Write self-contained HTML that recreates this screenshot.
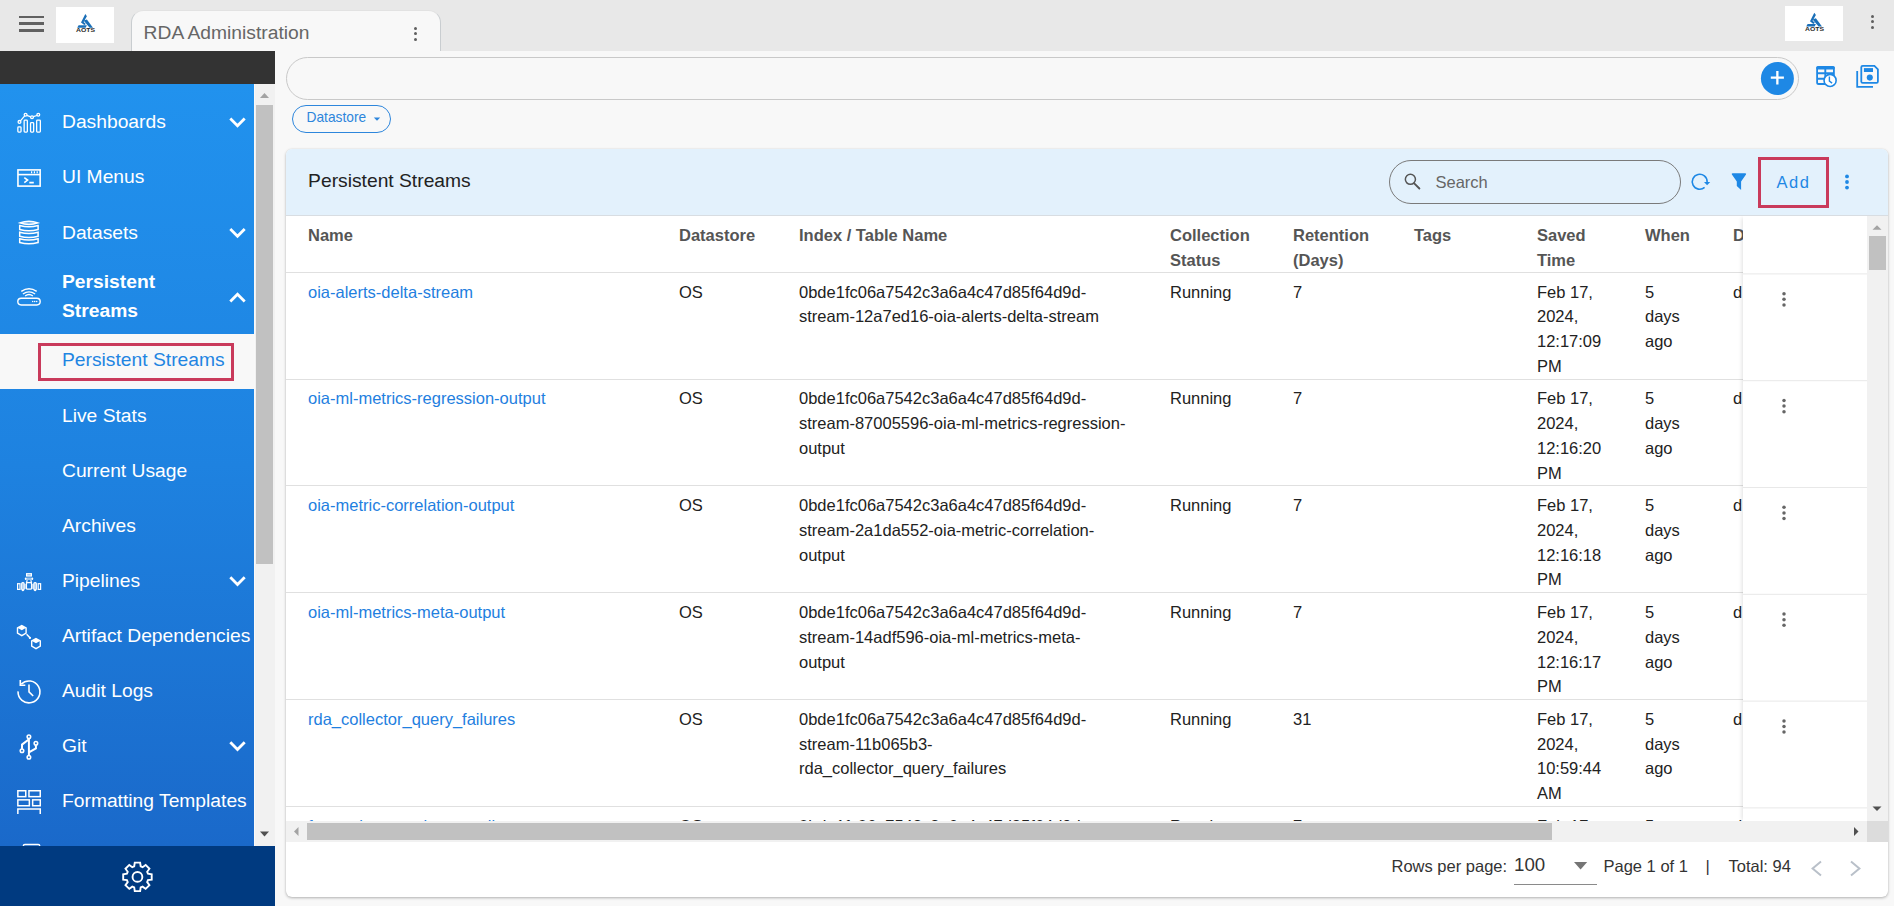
<!DOCTYPE html>
<html><head><meta charset="utf-8">
<style>
*{box-sizing:border-box;margin:0;padding:0}
html,body{width:1894px;height:906px;overflow:hidden;background:#f8f8f8;font-family:"Liberation Sans",sans-serif}
.abs{position:absolute}
#top{left:0;top:0;width:1894px;height:51px;background:#e8e8e8}
.hb{left:19px;width:25px;height:2.6px;background:#616161}
.logo{background:#fff}
#tab{left:131px;top:10px;width:310px;height:42px;background:#f8f8f8;border:1px solid #c9cdd0;border-top-color:#e2e2e2;border-bottom:none;border-radius:12.5px 12.5px 0 0}
#tab .t{left:11.6px;top:11.2px;font-size:19.25px;line-height:1.1172;color:#666;white-space:nowrap}
.dot{width:3.1px;height:3.1px;border-radius:50%;background:#5f5f5f}
#dark{left:0;top:51px;width:275px;height:33px;background:#333}
#side{left:0;top:84px;width:254px;height:762px;background:linear-gradient(180deg,#2192ee 0%,#1e82e0 50%,#1a69ca 100%);overflow:hidden}
#sscroll{left:254px;top:84px;width:21px;height:762px;background:#f1f1f1;border-left:1px solid #f9f9f9}
#foot{left:0;top:846px;width:275px;height:60px;background:#003a80}
.st{position:absolute;left:62px;font-size:19.25px;line-height:1.1172;color:#fff;white-space:nowrap}
.st.b{font-weight:bold}
#main{left:275px;top:51px;width:1619px;height:855px;background:#f8f8f8}
#card{left:286px;top:149px;width:1602px;height:748px;background:#fff;border-radius:6px;box-shadow:0 1px 3px rgba(0,0,0,.28),0 0 1px rgba(0,0,0,.12);overflow:hidden}
#chead{left:0;top:0;width:1602px;height:66.5px;background:#e3f1fc;border-bottom:1px solid #d8dde2}
.th{position:absolute;font-weight:bold;font-size:16.5px;line-height:24.75px;color:#555}
.td{position:absolute;font-size:16.5px;line-height:24.75px;color:#222;white-space:nowrap}
.lnk{color:#1f80e0}
.pg{font-size:16.5px;line-height:1.1172;color:#333;white-space:nowrap}
.hr{position:absolute;left:0;width:1581px;height:1px;background:#e0e0e0}
</style></head><body>
<div id="top" class="abs">
  <div class="abs hb" style="top:15.5px"></div>
  <div class="abs hb" style="top:22.2px"></div>
  <div class="abs hb" style="top:29px"></div>
  <div class="abs logo" style="left:56px;top:7px;width:58px;height:36px"></div>
  <div id="tab" class="abs"><div class="abs t">RDA Administration</div>
    <div class="abs dot" style="left:281.5px;top:15.7px"></div>
    <div class="abs dot" style="left:281.5px;top:21.2px"></div>
    <div class="abs dot" style="left:281.5px;top:26.7px"></div>
  </div>
  <div class="abs logo" style="left:1785px;top:6px;width:58px;height:35px"></div>
<svg class="abs" style="left:0;top:0" width="1894" height="51" viewBox="0 0 1894 51">
 <defs><g id="lg">
  <path d="M85.3,14 L86.9,16.3 L83.6,21.9 L85.9,23.9 L84.3,25.1 L81,22.4 Z" fill="#1a6fb8"/>
  <path d="M83.6,20.6 L86.9,19.4 L93,27.8 L89.6,27.8 Z" fill="#1a6fb8"/>
  <path d="M78.6,25.2 L86.9,25.2 L85.6,27.8 L77.2,27.8 Z" fill="#1a6fb8"/>
  <text x="85.6" y="32.4" font-family="Liberation Sans" font-weight="bold" font-size="5.2" text-anchor="middle" fill="#2a2a2a" textLength="19" lengthAdjust="spacingAndGlyphs" transform="translate(0,0)">AOTS</text>
 </g></defs>
 <use href="#lg"/>
 <use href="#lg" transform="translate(1729,-1.2)"/>
</svg>
  <div class="abs dot" style="left:1871.1px;top:14.6px"></div>
  <div class="abs dot" style="left:1871.1px;top:20.1px"></div>
  <div class="abs dot" style="left:1871.1px;top:25.6px"></div>
</div>
<div id="dark" class="abs"></div>
<div id="side" class="abs">
<div class="st" style="top:27.08px">Dashboards</div>
<div class="st" style="top:82.08px">UI Menus</div>
<div class="st" style="top:137.58px">Datasets</div>
<div class="st b" style="top:186.90px">Persistent</div>
<div class="st b" style="top:215.70px">Streams</div>
<div class="abs" style="left:0;top:250px;width:254px;height:55px;background:#f8f8f8"></div>
<div class="abs" style="left:38px;top:259px;width:196px;height:38px;border:3px solid #c93a5b"></div>
<div class="st" style="top:265.40px;color:#1f85e2">Persistent Streams</div>
<div class="st" style="top:320.88px">Live Stats</div>
<div class="st" style="top:375.68px">Current Usage</div>
<div class="st" style="top:430.68px">Archives</div>
<div class="st" style="top:485.68px">Pipelines</div>
<div class="st" style="top:540.68px">Artifact Dependencies</div>
<div class="st" style="top:595.68px">Audit Logs</div>
<div class="st" style="top:650.68px">Git</div>
<div class="st" style="top:705.88px">Formatting Templates</div>
<svg class="abs" style="left:0;top:0" width="254" height="762" viewBox="0 84 254 762" fill="none" stroke="#fff" stroke-width="1.4">
 <g fill="none" stroke="#fff" stroke-width="2.8" stroke-linejoin="miter"><path d="M230.3,118.60 L237.5,125.80 L244.7,118.60"/><path d="M230.3,229.10 L237.5,236.30 L244.7,229.10"/><path d="M230.3,301.40 L237.5,294.20 L244.7,301.40"/><path d="M230.3,577.20 L237.5,584.40 L244.7,577.20"/><path d="M230.3,742.20 L237.5,749.40 L244.7,742.20"/></g>
 <!-- dashboards -->
 <g stroke-width="1.3">
  <rect x="17.85" y="126.95" width="3.2" height="5.2" rx="0.8"/>
  <rect x="24.15" y="120.15" width="3.2" height="12" rx="0.8"/>
  <rect x="30.55" y="122.65" width="3.1" height="9.5" rx="0.8"/>
  <rect x="36.65" y="120.15" width="3.7" height="12" rx="0.8"/>
  <circle cx="19.5" cy="121.9" r="1.4"/><circle cx="25.6" cy="114.7" r="1.4"/><circle cx="32" cy="117.3" r="1.4"/><circle cx="38.3" cy="114.8" r="1.4"/>
  <path d="M20.4,120.8 L24.7,115.8 M26.9,115.4 L30.7,116.8 M33.3,116.6 L37,115.5"/>
 </g>
 <!-- ui menus -->
 <g stroke-width="1.6">
  <rect x="17.95" y="169.9" width="22.2" height="16.2"/>
  <path d="M17.9,174.6 H40.1"/>
  <path d="M24.3,177.6 L27.6,180.1 L24.3,182.6 M29.3,182.6 H33.8"/>
 </g>
 <g fill="#fff" stroke="none"><rect x="31" y="171.3" width="1.2" height="2"/><rect x="33.8" y="171.3" width="1.2" height="2"/><rect x="36.6" y="171.3" width="1.2" height="2"/></g>
 <!-- datasets -->
 <g stroke-width="1.5">
  <path d="M19.9,222.9 Q28.9,219.6 37.9,222.9 Q28.9,225.9 19.9,222.9 Z" fill="rgba(255,255,255,.35)"/>
  <path d="M19.7,225.6 Q28.9,228 38.1,225.6 V229.6 Q28.9,232 19.7,229.6 Z"/>
  <path d="M19.7,232.2 Q28.9,234.6 38.1,232.2 V236.2 Q28.9,238.6 19.7,236.2 Z"/>
  <path d="M19.7,238.8 Q28.9,241.2 38.1,238.8 V242.6 Q28.9,245 19.7,242.6 Z"/>
 </g>
 <!-- persistent streams -->
 <g stroke-width="1.4">
  <rect x="17.8" y="298.2" width="22.4" height="6.8" rx="3.4"/>
  <path d="M21.3,291.4 Q29,286.2 36.7,291.4 M22.9,294 Q29,289.8 35.1,294 M25.1,296 Q29,293 32.9,296"/>
 </g>
 <g fill="#fff" stroke="none"><circle cx="32.7" cy="301.6" r="0.75"/><circle cx="34.7" cy="301.6" r="0.75"/><circle cx="36.7" cy="301.6" r="0.75"/></g>
 <!-- pipelines -->
 <g stroke-width="1.2">
  <rect x="26.6" y="573.7" width="4.8" height="2.3" fill="rgba(255,255,255,.45)"/>
  <rect x="25.7" y="577.5" width="6.6" height="2.5" rx="1.2" fill="rgba(255,255,255,.55)" stroke="none"/>
  <rect x="24.9" y="577.6" width="1.5" height="2.4" rx=".7" fill="#fff" stroke="none"/>
  <rect x="31.6" y="577.6" width="1.5" height="2.4" rx=".7" fill="#fff" stroke="none"/>
  <path d="M27.2,580.2 L26.4,583 M30.8,580.2 L31.6,583"/>
  <rect x="26.4" y="582.6" width="5.2" height="6.6" rx="1.2" fill="none" stroke-width="1.3"/>
  <rect x="17.6" y="583.7" width="2.4" height="5.7"/>
  <rect x="38.2" y="583.7" width="2.4" height="5.7"/>
  <rect x="21.7" y="582.6" width="2.4" height="7.5" rx="1" fill="rgba(255,255,255,.5)"/>
  <rect x="33.9" y="582.6" width="2.4" height="7.5" rx="1" fill="rgba(255,255,255,.5)"/>
  <rect x="24.1" y="584" width="1.9" height="5" fill="rgba(255,255,255,.5)" stroke="none"/>
  <rect x="32" y="584" width="1.9" height="5" fill="rgba(255,255,255,.5)" stroke="none"/>
 </g>
 <g fill="#fff" stroke="none"><circle cx="22.9" cy="590.3" r="1"/><circle cx="35.1" cy="590.3" r="1"/></g>
 <!-- artifact deps -->
 <g stroke-width="1.4">
  <path d="M21.8,625.6 L26.1,628 V633.2 L21.8,635.6 L17.5,633.2 V628 Z"/>
  <path d="M36,638.6 L40.3,641 V646.2 L36,648.6 L31.7,646.2 V641 Z"/>
  <path d="M26.6,634.3 L30.4,638.2" stroke-width="1.5"/>
 </g>
 <g fill="#fff" stroke="none">
  <path d="M17.8,627.9 L21.8,625.6 L25.8,627.9 L21.8,630.2 Z"/>
  <path d="M32,640.9 L36,638.6 L40,640.9 L36,643.2 Z"/>
  <circle cx="29.9" cy="637.9" r="1.1"/>
 </g>
 <!-- audit logs -->
 <g stroke-width="1.6">
  <path d="M18.05,691.4 A10.95,10.95 0 1 0 21.26,684.16"/>
  <path d="M20.3,680 V685.2 H25.3"/>
  <path d="M29,684.6 V691.9 L33.2,696"/>
 </g>
 <!-- git -->
 <g stroke-width="1.6">
  <circle cx="28.9" cy="736.8" r="1.75"/><circle cx="35.9" cy="743.3" r="1.75"/><circle cx="22" cy="750.8" r="1.75"/><circle cx="28.9" cy="757.3" r="1.75"/>
 </g>
 <g stroke-width="2">
  <path d="M28.9,738.5 V755.6 M28.3,739.8 L22,744.6 V749 M28.9,752.4 L35.9,748.4 V745"/>
 </g>
 <!-- formatting templates -->
 <g stroke-width="1.5">
  <rect x="17.85" y="790.75" width="7.9" height="5.9"/>
  <rect x="28.95" y="790.75" width="11.3" height="5.9"/>
  <rect x="17.85" y="799.85" width="11.5" height="5.9"/>
  <rect x="32.65" y="799.85" width="7.6" height="5.9"/>
  <path d="M17.85,814 V808.9 H40.25 V814"/>
 </g>
 <rect x="23.3" y="844.5" width="16.5" height="6" rx="1.6" stroke-width="1.4"/>
</svg>
</div>
<div id="sscroll" class="abs"></div>
<div id="foot" class="abs"></div>
<div id="main" class="abs"></div>
<div class="abs" style="left:256px;top:105px;width:17px;height:458.6px;background:#c1c1c1"></div>
<svg class="abs" style="left:254px;top:84px" width="21" height="762" viewBox="254 84 21 762">
 <path d="M260,98.1 L264.5,93 L269,98.1 Z" fill="#a3a3a3"/>
 <path d="M260,831.5 L264.5,836.5 L269,831.5 Z" fill="#505050"/>
</svg>
<svg class="abs" style="left:115px;top:855px" width="45" height="45" viewBox="115 855 45 45" fill="none" stroke="#fff" stroke-width="1.9">
 <path id="gear" d="M134.20,866.39 L134.77,862.65 L140.13,862.65 L140.70,866.39 L142.58,867.17 L145.63,864.93 L149.42,868.72 L147.18,871.77 L147.96,873.65 L151.70,874.22 L151.70,879.58 L147.96,880.15 L147.18,882.03 L149.42,885.08 L145.63,888.87 L142.58,886.63 L140.70,887.41 L140.13,891.15 L134.77,891.15 L134.20,887.41 L132.32,886.63 L129.27,888.87 L125.48,885.08 L127.72,882.03 L126.94,880.15 L123.20,879.58 L123.20,874.22 L126.94,873.65 L127.72,871.77 L125.48,868.72 L129.27,864.93 L132.32,867.17 Z" stroke-linejoin="miter"/>
 <circle cx="137.45" cy="876.9" r="4.9"/>
</svg>
<div class="abs" style="left:286px;top:57px;width:1513px;height:43px;border:1px solid #c9c9c9;border-radius:21.5px"></div>
<svg class="abs" style="left:1750px;top:52px" width="144" height="52" viewBox="1750 52 144 52">
 <circle cx="1777.4" cy="78.4" r="16.5" fill="#1e88e5"/>
 <path d="M1770.8,77.6 H1783.9 M1777.35,71 V84.4" stroke="#fff" stroke-width="2.3"/>
 <g fill="none" stroke="#1e88e5" stroke-width="1.8">
  <rect x="1817.1" y="67" width="16.8" height="17" rx="1.6"/>
  <path d="M1817.5,73.3 H1833.5 M1817.5,78.8 H1830 M1825.3,67.5 V78.8" stroke-width="1.9"/>
 </g>
 <rect x="1816.3" y="66.2" width="18.5" height="3.2" rx="1.4" fill="#1e88e5"/>
 <circle cx="1830.1" cy="80.4" r="6.05" fill="#fff" stroke="#1e88e5" stroke-width="1.6"/>
 <path d="M1829.4,76.6 V81.1 L1832.1,83.1" fill="none" stroke="#1e88e5" stroke-width="1.4"/>
 <g fill="none" stroke="#1e88e5" stroke-width="1.8">
  <path d="M1861.3,82.1 V67.2 Q1861.3,65.8 1862.7,65.8 H1874.4 L1877.9,69.3 V81.5 Q1877.9,82.9 1876.5,82.9 H1862.7 Q1861.3,82.9 1861.3,81.5 Z"/>
  <path d="M1857.2,71 V86.9 H1873"/>
 </g>
 <rect x="1863.9" y="68.1" width="9.1" height="3.9" fill="#1e88e5"/>
 <circle cx="1869.8" cy="77.6" r="3.05" fill="#1e88e5"/>
</svg>
<div class="abs" style="left:292px;top:105px;width:99px;height:28px;border:1.5px solid #2d86dc;border-radius:14px"></div>
<div class="abs" style="left:306.5px;top:110.3px;font-size:13.75px;line-height:1.1172;color:#2d86dc">Datastore</div>
<svg class="abs" style="left:370px;top:110px" width="15" height="15" viewBox="370 110 15 15"><path d="M373.8,117.5 H380.2 L377,120.7 Z" fill="#2d86dc"/></svg>
<div id="card" class="abs">
  <div id="chead" class="abs"></div>
  <div class="abs" style="left:22.1px;top:21.4px;font-size:19.25px;line-height:1.1172;color:#222;white-space:nowrap">Persistent Streams</div>
  <div class="abs" style="left:1103px;top:11px;width:292px;height:44px;border:1px solid #7a7a7a;border-radius:22px"></div>
  <div class="abs" style="left:1149.5px;top:23.9px;font-size:16.5px;line-height:1.1172;color:#666;white-space:nowrap">Search</div>
  <div class="abs" style="left:1472px;top:8px;width:71px;height:51px;border:3px solid #c93a5b"></div>
  <div class="abs" style="left:1490.5px;top:23.9px;font-size:16.5px;line-height:1.1172;color:#1e88e5;letter-spacing:1.5px;white-space:nowrap">Add</div>
  <div class="abs" style="left:0;top:66.5px;width:1581px;height:605.5px;overflow:hidden">
   <div class="abs" style="left:0;top:-66.5px;width:1602px;height:748px">
<div class="th" style="left:22.0px;top:73.90px">Name</div>
<div class="th" style="left:393.0px;top:73.90px">Datastore</div>
<div class="th" style="left:513.0px;top:73.90px">Index / Table Name</div>
<div class="th" style="left:884.0px;top:73.90px">Collection<br>Status</div>
<div class="th" style="left:1007.0px;top:73.90px">Retention<br>(Days)</div>
<div class="th" style="left:1128.0px;top:73.90px">Tags</div>
<div class="th" style="left:1251.0px;top:73.90px">Saved<br>Time</div>
<div class="th" style="left:1359.0px;top:73.90px">When</div>
<div class="th" style="left:1447.0px;top:73.90px">D</div>
<div class="hr" style="top:122.70px"></div>
<div class="hr" style="top:229.50px"></div>
<div class="hr" style="top:336.30px"></div>
<div class="hr" style="top:443.10px"></div>
<div class="hr" style="top:549.90px"></div>
<div class="hr" style="top:656.70px"></div>
<div class="td lnk" style="left:22.0px;top:130.60px">oia-alerts-delta-stream</div>
<div class="td" style="left:393.0px;top:130.60px">OS</div>
<div class="td" style="left:513.0px;top:130.60px">0bde1fc06a7542c3a6a4c47d85f64d9d-<br>stream-12a7ed16-oia-alerts-delta-stream</div>
<div class="td" style="left:884.0px;top:130.60px">Running</div>
<div class="td" style="left:1007.0px;top:130.60px">7</div>
<div class="td" style="left:1251.0px;top:130.60px">Feb 17,<br>2024,<br>12:17:09<br>PM</div>
<div class="td" style="left:1359.0px;top:130.60px">5<br>days<br>ago</div>
<div class="td" style="left:1447.0px;top:130.60px">d</div>
<div class="td lnk" style="left:22.0px;top:237.40px">oia-ml-metrics-regression-output</div>
<div class="td" style="left:393.0px;top:237.40px">OS</div>
<div class="td" style="left:513.0px;top:237.40px">0bde1fc06a7542c3a6a4c47d85f64d9d-<br>stream-87005596-oia-ml-metrics-regression-<br>output</div>
<div class="td" style="left:884.0px;top:237.40px">Running</div>
<div class="td" style="left:1007.0px;top:237.40px">7</div>
<div class="td" style="left:1251.0px;top:237.40px">Feb 17,<br>2024,<br>12:16:20<br>PM</div>
<div class="td" style="left:1359.0px;top:237.40px">5<br>days<br>ago</div>
<div class="td" style="left:1447.0px;top:237.40px">d</div>
<div class="td lnk" style="left:22.0px;top:344.20px">oia-metric-correlation-output</div>
<div class="td" style="left:393.0px;top:344.20px">OS</div>
<div class="td" style="left:513.0px;top:344.20px">0bde1fc06a7542c3a6a4c47d85f64d9d-<br>stream-2a1da552-oia-metric-correlation-<br>output</div>
<div class="td" style="left:884.0px;top:344.20px">Running</div>
<div class="td" style="left:1007.0px;top:344.20px">7</div>
<div class="td" style="left:1251.0px;top:344.20px">Feb 17,<br>2024,<br>12:16:18<br>PM</div>
<div class="td" style="left:1359.0px;top:344.20px">5<br>days<br>ago</div>
<div class="td" style="left:1447.0px;top:344.20px">d</div>
<div class="td lnk" style="left:22.0px;top:451.00px">oia-ml-metrics-meta-output</div>
<div class="td" style="left:393.0px;top:451.00px">OS</div>
<div class="td" style="left:513.0px;top:451.00px">0bde1fc06a7542c3a6a4c47d85f64d9d-<br>stream-14adf596-oia-ml-metrics-meta-<br>output</div>
<div class="td" style="left:884.0px;top:451.00px">Running</div>
<div class="td" style="left:1007.0px;top:451.00px">7</div>
<div class="td" style="left:1251.0px;top:451.00px">Feb 17,<br>2024,<br>12:16:17<br>PM</div>
<div class="td" style="left:1359.0px;top:451.00px">5<br>days<br>ago</div>
<div class="td" style="left:1447.0px;top:451.00px">d</div>
<div class="td lnk" style="left:22.0px;top:557.80px">rda_collector_query_failures</div>
<div class="td" style="left:393.0px;top:557.80px">OS</div>
<div class="td" style="left:513.0px;top:557.80px">0bde1fc06a7542c3a6a4c47d85f64d9d-<br>stream-11b065b3-<br>rda_collector_query_failures</div>
<div class="td" style="left:884.0px;top:557.80px">Running</div>
<div class="td" style="left:1007.0px;top:557.80px">31</div>
<div class="td" style="left:1251.0px;top:557.80px">Feb 17,<br>2024,<br>10:59:44<br>AM</div>
<div class="td" style="left:1359.0px;top:557.80px">5<br>days<br>ago</div>
<div class="td" style="left:1447.0px;top:557.80px">d</div>
<div class="td lnk" style="left:22.0px;top:664.60px">formatting-templates-audit-output</div>
<div class="td" style="left:393.0px;top:664.60px">OS</div>
<div class="td" style="left:513.0px;top:664.60px">0bde1fc06a7542c3a6a4c47d85f64d9d-<br>stream-</div>
<div class="td" style="left:884.0px;top:664.60px">Running</div>
<div class="td" style="left:1007.0px;top:664.60px">7</div>
<div class="td" style="left:1251.0px;top:664.60px">Feb 17,<br>2024,<br>12:16:10<br>PM</div>
<div class="td" style="left:1359.0px;top:664.60px">5<br>days<br>ago</div>
<div class="td" style="left:1447.0px;top:664.60px">d</div>
   </div>
   <div class="abs" style="left:1456.8px;top:0;width:130px;height:606px;background:#fff;box-shadow:-3px 0 4px -2px rgba(0,0,0,.12)"></div>
   <svg class="abs" style="left:0;top:0" width="1581" height="606" viewBox="286 215.5 1581 606">
    <g fill="#e8e8e8"><rect x="1742.8" y="272.90" width="124.2" height="1"/><rect x="1742.8" y="379.70" width="124.2" height="1"/><rect x="1742.8" y="486.50" width="124.2" height="1"/><rect x="1742.8" y="593.30" width="124.2" height="1"/><rect x="1742.8" y="700.10" width="124.2" height="1"/><rect x="1742.8" y="806.90" width="124.2" height="1"/></g>
    <g fill="#666"><circle cx="1784" cy="293.20" r="1.75"/><circle cx="1784" cy="298.80" r="1.75"/><circle cx="1784" cy="304.40" r="1.75"/><circle cx="1784" cy="400.00" r="1.75"/><circle cx="1784" cy="405.60" r="1.75"/><circle cx="1784" cy="411.20" r="1.75"/><circle cx="1784" cy="506.80" r="1.75"/><circle cx="1784" cy="512.40" r="1.75"/><circle cx="1784" cy="518.00" r="1.75"/><circle cx="1784" cy="613.60" r="1.75"/><circle cx="1784" cy="619.20" r="1.75"/><circle cx="1784" cy="624.80" r="1.75"/><circle cx="1784" cy="720.40" r="1.75"/><circle cx="1784" cy="726.00" r="1.75"/><circle cx="1784" cy="731.60" r="1.75"/><circle cx="1784" cy="827.20" r="1.75"/><circle cx="1784" cy="832.80" r="1.75"/><circle cx="1784" cy="838.40" r="1.75"/></g>
   </svg>
  </div>
  <div class="abs" style="left:1581px;top:66.5px;width:21px;height:605.5px;background:#f1f1f1"></div>
  <div class="abs" style="left:1583px;top:87px;width:17px;height:34px;background:#c1c1c1"></div>
  <div class="abs" style="left:0;top:672px;width:1581px;height:20.8px;background:#f1f1f1"></div>
  <div class="abs" style="left:21px;top:674px;width:1244.7px;height:16.7px;background:#c1c1c1"></div>
  <div class="abs" style="left:1581px;top:672px;width:21px;height:20.8px;background:#dcdcdc"></div>
  <svg class="abs" style="left:0;top:0" width="1602" height="748" viewBox="286 149 1602 748">
   <path d="M1872.5,229.8 L1877,225.3 L1881.5,229.8 Z" fill="#a3a3a3"/>
   <path d="M1872.5,806.5 L1877,811 L1881.5,806.5 Z" fill="#505050"/>
   <path d="M298.5,827 L294,831.5 L298.5,836 Z" fill="#a3a3a3"/>
   <path d="M1854,827 L1858.5,831.5 L1854,836 Z" fill="#505050"/>
  </svg>
  <svg class="abs" style="left:0;top:0" width="1602" height="66" viewBox="286 149 1602 66">
   <circle cx="1410.4" cy="179.3" r="5.05" fill="none" stroke="#555" stroke-width="1.5"/>
   <path d="M1414.2,183.3 L1419.4,188.5" stroke="#555" stroke-width="1.9" stroke-linecap="round"/>
   <path d="M1704.6,187.4 A7.45,7.45 0 1 1 1707.15,181.9" fill="none" stroke="#1e88e5" stroke-width="1.6"/>
   <path d="M1704,182 H1710.2 L1707.1,185.2 Z" fill="#1e88e5"/>
   <path d="M1732.6,173.2 H1745.2 Q1746.8,173.3 1746,174.6 L1741.1,181.5 V190 L1736.8,186 V181.5 L1731.9,174.6 Q1731.1,173.3 1732.6,173.2 Z" fill="#1e88e5"/>
   <circle cx="1847" cy="176.4" r="1.9" fill="#1e88e5"/><circle cx="1847" cy="182" r="1.9" fill="#1e88e5"/><circle cx="1847" cy="187.6" r="1.9" fill="#1e88e5"/>
  </svg>
  <div class="abs pg" style="left:1105.5px;top:708.26px">Rows per page:</div>
  <div class="abs pg" style="left:1228.0px;top:705.87px;font-size:18.7px">100</div>
  <div class="abs" style="left:1228px;top:735px;width:83px;height:1px;background:#8a8a8a"></div>
  <div class="abs pg" style="left:1317.5px;top:708.26px">Page 1 of 1</div>
  <div class="abs pg" style="left:1419.5px;top:708.26px">|</div>
  <div class="abs pg" style="left:1442.5px;top:708.26px">Total: 94</div>
  <svg class="abs" style="left:0;top:0" width="1602" height="748" viewBox="286 149 1602 748">
   <path d="M1574,862 H1587.2 L1580.6,869.4 Z" fill="#757575"/>
   <path d="M1821,861.6 L1812.6,868.5 L1821,875.4" fill="none" stroke="#b9c0c9" stroke-width="2"/>
   <path d="M1851,861.6 L1859.4,868.5 L1851,875.4" fill="none" stroke="#b9c0c9" stroke-width="2"/>
  </svg>
</div>
</body></html>
